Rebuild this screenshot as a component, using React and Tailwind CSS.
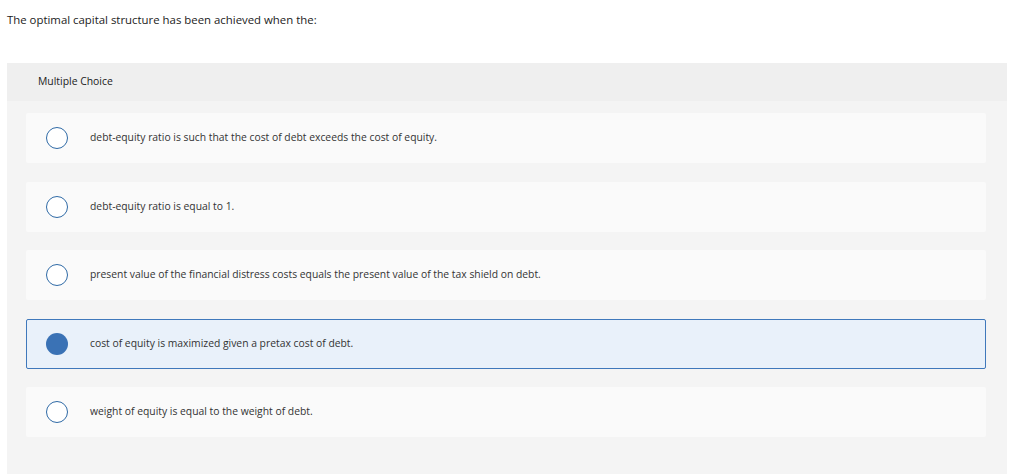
const choices = [
  { id: 'a', text: 'debt-equity ratio is such that the cost of debt exceeds the cost of equity.' },
  { id: 'b', text: 'debt-equity ratio is equal to 1.' },
  { id: 'c', text: 'present value of the financial distress costs equals the present value of the tax shield on debt.' },
  { id: 'd', text: 'cost of equity is maximized given a pretax cost of debt.' },
  { id: 'e', text: 'weight of equity is equal to the weight of debt.' },
]

function Choice({ text, selected }) {
  return (
    <div
      className={
        'h-[50px] flex items-center pl-[19px] rounded-[2px] border ' +
        (selected ? 'bg-[#e9f1fa] border-[#3f78bb]' : 'bg-[#fafafa] border-transparent')
      }
    >
      {selected ? (
        <span className="w-[22px] h-[22px] rounded-full bg-[#3a72b5] shrink-0" />
      ) : (
        <span className="w-[22px] h-[22px] rounded-full border-[1.5px] border-[#2f6aa6] bg-white shrink-0" />
      )}
      <span className="ml-[22px] text-[10.35px] text-[#333]">{text}</span>
    </div>
  )
}

export default function App() {
  const selected = 'd'

  return (
    <div className="w-[1024px] h-[474px] bg-white overflow-hidden" style={{ fontFamily: '"Open Sans", Arial, sans-serif' }}>
      <p className="pt-[12px] pl-[7px] text-[11.4px] leading-[16px] text-[#222]">
        The optimal capital structure has been achieved when the:
      </p>

      {/* Question panel */}
      <div className="mt-[35px] ml-[7px] w-[1000px]">
        <div className="h-[38px] bg-[#efefef] flex items-center pl-[31px] text-[10.4px] text-[#222]">
          Multiple Choice
        </div>
        <div className="bg-[#f4f4f4] pt-[12px] pb-[37px] pl-[19px] pr-[21px] flex flex-col gap-[18.5px]">
          {choices.map(c => (
            <Choice key={c.id} text={c.text} selected={c.id === selected} />
          ))}
        </div>
      </div>
    </div>
  )
}
